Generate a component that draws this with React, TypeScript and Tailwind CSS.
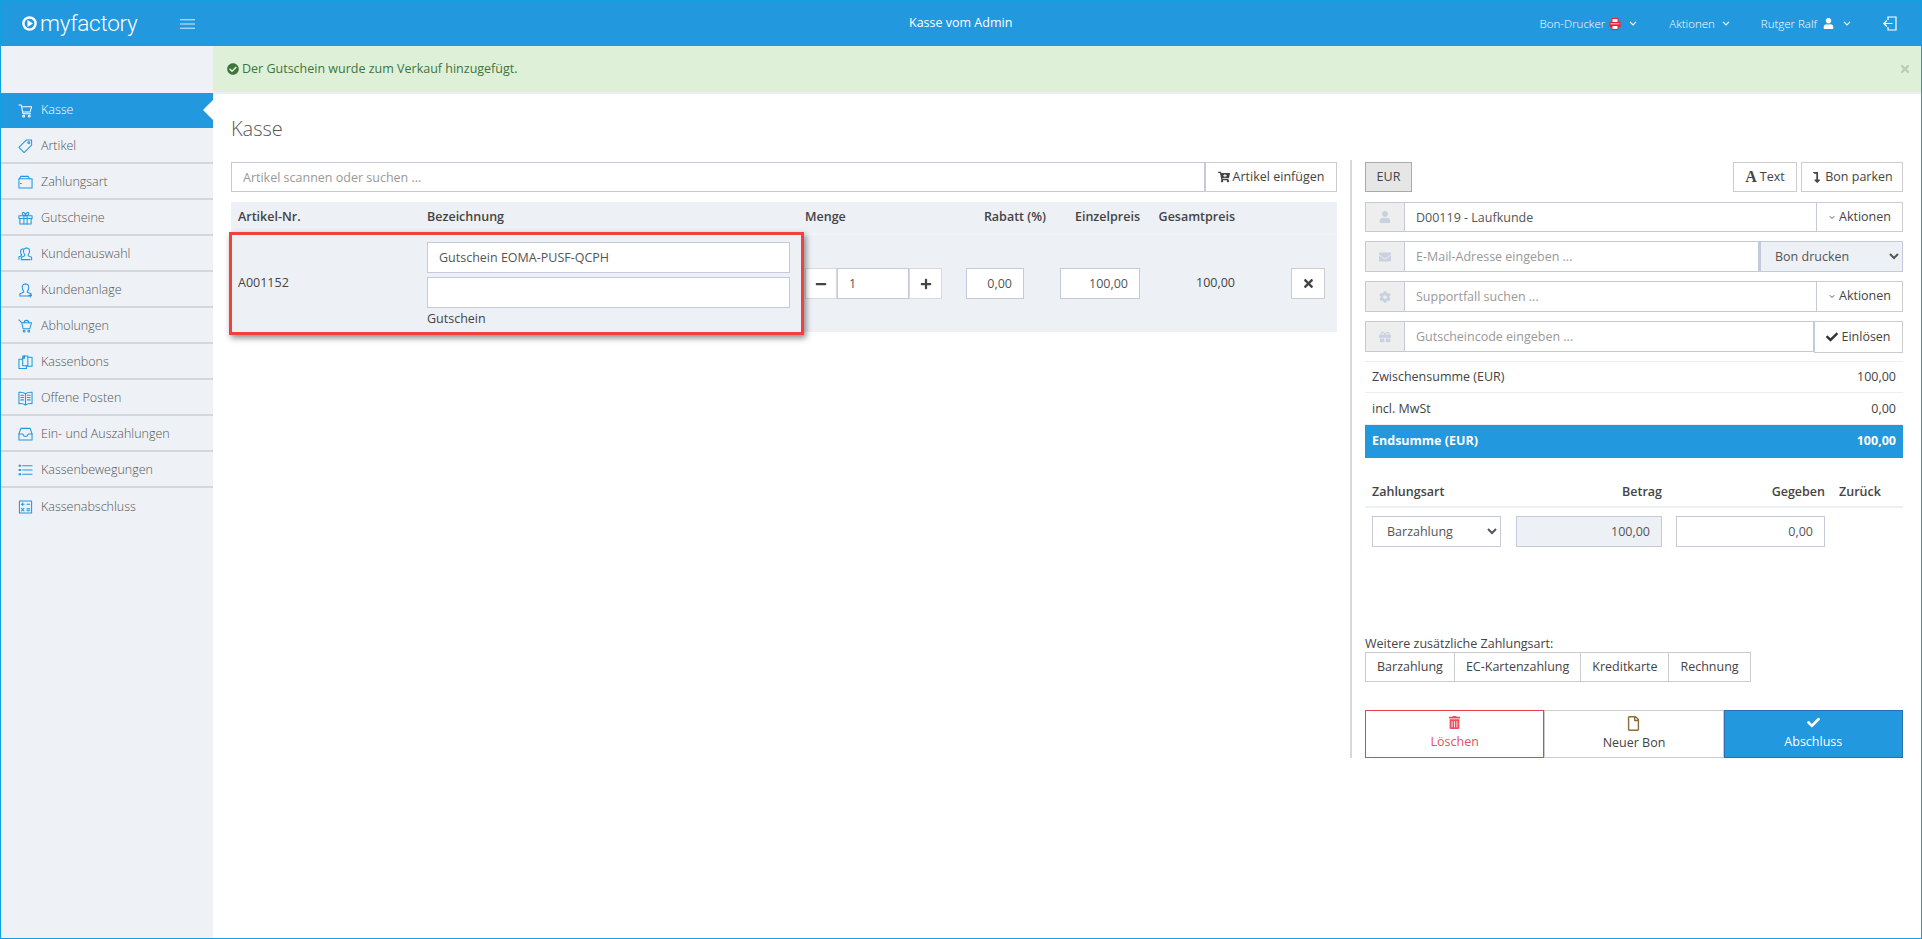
import type { ReactNode } from 'react';
import {
  FaCartPlus, FaCheck, FaCheckCircle, FaCog, FaEnvelope, FaGift, FaLevelDownAlt,
  FaMinus, FaPlus, FaRegFile, FaTimes, FaTrashAlt, FaUser,
} from 'react-icons/fa';

function Line({ children, className = '' }: { children: ReactNode; className?: string }) {
  return (
    <svg viewBox="0 0 16 16" fill="none" stroke="currentColor" strokeWidth="1.1" strokeLinejoin="round" strokeLinecap="round" className={`h-[16px] w-[15px] shrink-0 ${className}`}>
      {children}
    </svg>
  );
}

function Chevron({ className = '' }: { className?: string }) {
  return (
    <svg viewBox="0 0 8 5" fill="none" stroke="currentColor" strokeWidth="1.2" className={`h-[5px] w-[8px] shrink-0 ${className}`}>
      <path d="M1 .8 4 3.800 7 .8" />
    </svg>
  );
}

const navItems: { label: string; icon: ReactNode }[] = [
  { label: 'Kasse', icon: <><path d="M1 1.500h2.400l2 9.500h8" /><path d="M3.900 3.500h10.600l-1.600 5.500H5" /><circle cx="6" cy="13.500" r="1" /><circle cx="12" cy="13.500" r="1" /></> },
  { label: 'Artikel', icon: <><path d="M9 1.500h5.500V7L6.500 15 1 9.500z" /><circle cx="11.500" cy="4.500" r="1" /></> },
  { label: 'Zahlungsart', icon: <><path d="M1 4.500h14v10H1z" /><path d="M1.500 4.500 3 2h8l1 2.500" /><path d="M2.500 9.500h1" /></> },
  { label: 'Gutscheine', icon: <><path d="M1 5.500h14v3H1z" /><path d="M2 8.500h12v6H2z" /><path d="M6.300 5.500v9M9.700 5.500v9" /><path d="M8 5.500C6 5.500 4 4.500 4.500 2.800S7.500 2 8 5.500C8.500 2 11 1 11.500 2.800S10 5.500 8 5.500z" /></> },
  { label: 'Kundenauswahl', icon: <><path d="M9 1.500a3.200 3.200 0 0 0-3.200 3.300c0 1.800.7 3.200 1.400 3.900v1.300L3.500 11.500v2.500H13" /><path d="M9 1.500c2 0 3.300 1.500 3.300 3.300 0 1.800-.7 3.200-1.400 3.900v1.300l3.600 1.500V14" /><path d="M5.500 2.500C3.500 2.800 2.700 4 2.700 5.500c0 1.500.5 2.700 1.200 3.300v1L1 11v2.500" /></> },
  { label: 'Kundenanlage', icon: <><path d="M8 1.500a3.500 3.500 0 0 0-3.500 3.500c0 1.900.8 3.400 1.500 4.100v1.400L2 12v2.500h9.500" /><path d="M8 1.500A3.500 3.500 0 0 1 11.500 5c0 1.900-.8 3.400-1.500 4.100v1.400L14 12v1" /><path d="M13 12.500v3M11.500 14h3" /></> },
  { label: 'Abholungen', icon: <><path d="M1 1.500 4 4.500h10.500L12.500 11H5.500L4 4.500" /><path d="M6.500 4.500C6.500 3 7.500 2 9 2s2.500 1 2.500 2.500" /><circle cx="6.500" cy="13.500" r="1" /><circle cx="11.500" cy="13.500" r="1" /></> },
  { label: 'Kassenbons', icon: <><path d="M1 5h3.500M1 5v10h8v-3" /><path d="M5 1.500h5.500V12H5z" /><path d="M10.500 3H15v9.500h-4.500" /><path d="M5 4 7 1.500V4z" /></> },
  { label: 'Offene Posten', icon: <><path d="M8 3.500C6 2 3.500 1.800 1 2v12c2.500-.2 5 0 7 1.500 2-1.500 4.500-1.700 7-1.500V2c-2.500-.2-5 0-7 1.500zM8 3.500v12" /><path d="M3 5h3M3 7.500h3M3 10h3M10 5h3M10 7.500h3M10 10h3" /></> },
  { label: 'Ein- und Auszahlungen', icon: <><path d="M3 2h10l2 6v6.500H1V8z" /><path d="M1 8h4l1.500 2.500h3L11 8h4" /></> },
  { label: 'Kassenbewegungen', icon: <><path d="M5 3.500h10M5 8h10M5 12.500h10" /><path d="M1.500 3.500h1M1.500 8h1M1.500 12.500h1" strokeWidth="2" /></> },
  { label: 'Kassenabschluss', icon: <><path d="M1.500 1.500h13v13h-13z" /><path d="M3.500 5h3M5 3.500v3M9.500 5h3M3.700 9.500l2.600 2.600M6.300 9.500l-2.600 2.600M9.500 10h3M9.500 12h3" /></> },
];

const inputCls = 'h-full min-w-0 flex-1 border border-[#c4c9dc] px-[11px] text-[12.5px] text-[#555] outline-none placeholder:text-[#999]';
const btnCls = 'flex items-center justify-center gap-[3px] border border-[#ccc] bg-white text-[12.5px] text-[#444]';

function Sidebar() {
  return (
    <aside className="w-[212px] shrink-0 bg-[#eef1f5] pt-[47px]">
      {navItems.map((item, index) => (
        <div
          key={item.label}
          className={
            index === 0
              ? 'relative flex h-[35px] items-center gap-[8px] bg-[#2298df] pl-[17px] text-white'
              : 'flex h-[36px] items-center gap-[8px] border-b-2 border-[#d3d6da] pt-[2px] pl-[17px] text-[#2298df] last:border-b-0'
          }
        >
          <Line className={index === 0 ? 'text-white' : ''}>{item.icon}</Line>
          <span className={`text-[12.5px] font-light ${index === 0 ? 'text-white' : 'text-[#555]'}`}>{item.label}</span>
          {index === 0 && <span className="absolute top-[7px] right-0 h-0 w-0 border-y-[10px] border-r-[10px] border-y-transparent border-r-white" />}
        </div>
      ))}
    </aside>
  );
}

function Header() {
  return (
    <header className="relative flex h-[45px] shrink-0 items-center bg-[#2298df] text-[11.5px] font-light text-white">
      <div className="flex w-[212px] shrink-0 items-center pl-[21px]">
        <svg viewBox="0 0 16 16" className="mr-[3px] h-[15px] w-[15px]">
          <circle cx="8" cy="8" r="6.500" fill="none" stroke="white" strokeWidth="2.600" />
          <path d="M5.800 4.200 11.800 8l-6 3.800z" fill="white" />
        </svg>
        <span className="w-[97px] font-['Roboto',sans-serif] text-[22.5px] leading-none font-light tracking-[-0.3px]">myfactory</span>
        <svg viewBox="0 0 16 10" className="ml-[43px] h-[10px] w-[15px]" stroke="white" strokeWidth="0.900">
          <path d="M0 .5h16M0 5h16M0 9.500h16" />
        </svg>
      </div>
      <span className="absolute left-[908px] text-[12.5px] font-normal">Kasse vom Admin</span>
      <div className="ml-auto flex items-center pr-[24px]">
        <span>Bon-Drucker</span>
        <svg viewBox="0 0 12 12" className="ml-[4px] h-[12px] w-[12px]">
          <path d="M3 .5h6v4H3z" fill="white" stroke="#ee1c34" />
          <path d="M.5 4h11v5H.5z" fill="#ee1c34" />
          <path d="M1.500 5.800h9" stroke="white" strokeWidth=".8" />
          <path d="M3 7.500h6v4H3z" fill="white" stroke="#ee1c34" />
        </svg>
        <Chevron className="ml-[8px]" />
        <span className="ml-[32px]">Aktionen</span>
        <Chevron className="ml-[7px]" />
        <span className="ml-[31px]">Rutger Ralf</span>
        <FaUser className="ml-[6px] text-[11px]" />
        <Chevron className="ml-[9px]" />
        <svg viewBox="0 0 14 15" fill="none" stroke="white" strokeWidth="1.200" className="ml-[32px] h-[15px] w-[14px]">
          <path d="M5 4V1h8v13H5v-3M9.500 7.500H1M3.800 4.500l-3 3 3 3" />
        </svg>
      </div>
    </header>
  );
}

function CartTable() {
  return (
    <div className="mt-[10px] bg-[#edf0f5] text-[12.5px] text-[#444]">
      <div className="grid h-[33px] grid-cols-[189px_377px_145px_111px_94px_95px_95px] items-center border-b-2 border-[#f1f3f6] font-semibold text-[#444]">
        <span className="pl-[7px]">Artikel-Nr.</span>
        <span className="pl-[7px]">Bezeichnung</span>
        <span className="pl-[8px]">Menge</span>
        <span className="pr-[7px] text-right">Rabatt (%)</span>
        <span className="pr-[7px] text-right">Einzelpreis</span>
        <span className="pr-[7px] text-right">Gesamtpreis</span>
        <span />
      </div>
      <div className="grid h-[97px] grid-cols-[189px_377px_145px_111px_94px_95px_95px] items-center">
        <span className="pl-[7px]">A001152</span>
        <div className="flex flex-col gap-[4px] px-[7px]">
          <div className="h-[31px]"><input readOnly value="Gutschein EOMA-PUSF-QCPH" className={`${inputCls} w-full bg-white`} /></div>
          <div className="h-[31px]"><input readOnly value="" className={`${inputCls} w-full bg-white`} /></div>
          <span className="h-[14px] leading-[14px]">Gutschein</span>
        </div>
        <div className="flex h-[31px] items-stretch pl-[8px]">
          <button className={`${btnCls} w-[32px] border-[#d6d9e0] text-[#333]`}><FaMinus className="text-[12px]" /></button>
          <input readOnly value="1" className={`${inputCls} w-[72px] !flex-none bg-white`} />
          <button className={`${btnCls} w-[33px] border-[#d6d9e0] text-[#333]`}><FaPlus className="text-[12px]" /></button>
        </div>
        <div className="h-[31px] pl-[24px]"><input readOnly value="0,00" className={`${inputCls} w-[58px] bg-white text-right`} /></div>
        <div className="h-[31px] pl-[7px]"><input readOnly value="100,00" className={`${inputCls} w-[80px] bg-white text-right`} /></div>
        <span className="pr-[7px] text-right">100,00</span>
        <div className="pr-[12px]">
          <button className={`${btnCls} ml-auto h-[31px] w-[34px] border-[#c4c9dc] text-[#222]`}><FaTimes className="text-[13px]" /></button>
        </div>
      </div>
    </div>
  );
}

function InputGroup({ icon, placeholder, value, right, height = 'h-[31px]' }: { icon: ReactNode; placeholder?: string; value?: string; right: ReactNode; height?: string }) {
  return (
    <div className={`flex items-stretch text-[12.5px] ${height}`}>
      <span className="flex w-[39px] shrink-0 items-center justify-center border border-r-0 border-[#c4c9dc] bg-[#eee] text-[12px] text-[#c9d0e0]">{icon}</span>
      <input readOnly placeholder={placeholder} value={value} className={`${inputCls} bg-white`} />
      {right}
    </div>
  );
}

function ActionsButton() {
  return (
    <button className={`${btnCls} w-[86px] border-l-0 border-[#c4c9dc]`}>
      <Chevron className="scale-75" /> Aktionen
    </button>
  );
}

function Sale() {
  return (
    <div className="ml-[13px] flex h-[598px] w-[553px] flex-col border-l-2 border-[#d8d8d8] pt-[2px] pl-[13px] text-[12.5px] text-[#444]">
      <div className="flex h-[30px] gap-[4px]">
        <span className="mr-auto flex w-[47px] items-center justify-center border border-[#aaa] bg-[#e6e6e6]">EUR</span>
        <button className={`${btnCls} w-[64px]`}><span className="font-['Liberation_Serif',serif] text-[16px] leading-none font-bold">A</span> Text</button>
        <button className={`${btnCls} w-[102px]`}><FaLevelDownAlt className="text-[11px]" /> Bon parken</button>
      </div>
      <div className="mt-[10px] flex flex-col gap-[9px]">
        <InputGroup height="h-[30px]" icon={<FaUser />} value="D00119 - Laufkunde" right={<ActionsButton />} />
        <InputGroup
          icon={<FaEnvelope />}
          placeholder="E-Mail-Adresse eingeben ..."
          right={
            <select className="w-[144px] border border-l-2 border-[#c4c9dc] bg-[#edf0f5] pl-[10px] text-[12.5px] text-[#555] outline-none">
              <option>Bon drucken</option>
            </select>
          }
        />
        <InputGroup icon={<FaCog />} placeholder="Supportfall suchen ..." right={<ActionsButton />} />
        <InputGroup
          icon={<FaGift />}
          placeholder="Gutscheincode eingeben ..."
          right={<button className={`${btnCls} h-[32px] w-[89px] border-l-[#c4c9dc]`}><FaCheck className="text-[12px] text-[#333]" /> Einlösen</button>}
        />
      </div>
      <div className="mt-[9px]">
        <div className="flex h-[32px] items-center justify-between border-y border-[#eee] px-[7px] pt-[1px]"><span>Zwischensumme (EUR)</span><span>100,00</span></div>
        <div className="flex h-[32px] items-center justify-between border-b border-[#eee] px-[7px] pt-[1px]"><span>incl. MwSt</span><span>0,00</span></div>
        <div className="flex h-[33px] items-center justify-between bg-[#2298df] px-[7px] font-bold text-white"><span>Endsumme (EUR)</span><span>100,00</span></div>
      </div>
      <div className="mt-[25px] grid h-[25px] grid-cols-[7px_144px_146px_163px_1fr] items-start border-b-2 border-[#edf0f5] font-semibold text-[#444]">
        <span />
        <span>Zahlungsart</span>
        <span className="text-right">Betrag</span>
        <span className="text-right">Gegeben</span>
        <span className="pl-[14px]">Zurück</span>
      </div>
      <div className="mt-[8px] flex h-[31px] items-stretch pl-[7px]">
        <select className="w-[129px] border border-[#c4c9dc] bg-white pl-[10px] text-[12.5px] text-[#555] outline-none">
          <option>Barzahlung</option>
        </select>
        <input readOnly value="100,00" className={`${inputCls} ml-[15px] w-[146px] !flex-none bg-[#edf0f5] text-right`} />
        <input readOnly value="0,00" className={`${inputCls} ml-[14px] w-[149px] !flex-none bg-white text-right`} />
      </div>
      <p className="mt-[89px] leading-[16px]">Weitere zusätzliche Zahlungsart:</p>
      <div className="flex h-[30px]">
        {['Barzahlung', 'EC-Kartenzahlung', 'Kreditkarte', 'Rechnung'].map((label) => (
          <button key={label} className={`${btnCls} -mr-px px-[11px]`}>{label}</button>
        ))}
      </div>
      <div className="mt-[28px] grid h-[48px] grid-cols-3">
        <button className="flex flex-col items-center justify-center gap-[4px] border border-[#e8404f] bg-white text-[#e8505f]"><FaTrashAlt className="text-[13px]" />Löschen</button>
        <button className="flex flex-col items-center justify-center gap-[3px] border border-[#ccc] bg-white"><FaRegFile className="text-[15px] text-[#8a6d3b]" />Neuer Bon</button>
        <button className="flex flex-col items-center justify-center gap-[4px] border border-[#2a6fb0] bg-[#2298df] text-white"><FaCheck className="text-[13px]" />Abschluss</button>
      </div>
    </div>
  );
}

export default function App() {
  return (
    <div className="flex h-screen flex-col overflow-hidden border border-[#0fa0e2] bg-white font-['Open_Sans',sans-serif]">
      <Header />
      <div className="flex min-h-0 flex-1">
        <Sidebar />
        <main className="min-w-0 flex-1">
          <div className="flex h-[48px] items-center justify-between border-b-2 border-[#eceef2] bg-[#dff0d8] pr-[10px] pl-[14px] text-[12.5px] text-[#3c763d]">
            <span className="flex items-center gap-[3px]"><FaCheckCircle className="text-[12px]" /> Der Gutschein wurde zum Verkauf hinzugefügt.</span>
            <FaTimes className="text-[12px] text-[#b5ceb5]" />
          </div>
          <div className="flex pt-[16px] pl-[18px]">
            <div className="w-[1106px] shrink-0">
              <h1 className="mt-[7px] mb-[21px] h-[24px] text-[20px] leading-[24px] font-light text-[#555]">Kasse</h1>
              <div className="flex h-[30px] items-stretch">
                <input readOnly placeholder="Artikel scannen oder suchen ..." className={`${inputCls} bg-white`} />
                <button className={`${btnCls} w-[132px] border-l-[#c4c9dc]`}><FaCartPlus className="text-[12px]" /> Artikel einfügen</button>
              </div>
              <CartTable />
            </div>
            <div className="pt-[50px]">
              <Sale />
            </div>
          </div>
        </main>
      </div>
      {/* red annotation frame from the screenshot */}
      <div className="absolute top-[232px] left-[229px] h-[103px] w-[575px] border-[3px] border-[#f04040] shadow-[2px_3px_6px_rgba(0,0,0,0.45)]" />
    </div>
  );
}
